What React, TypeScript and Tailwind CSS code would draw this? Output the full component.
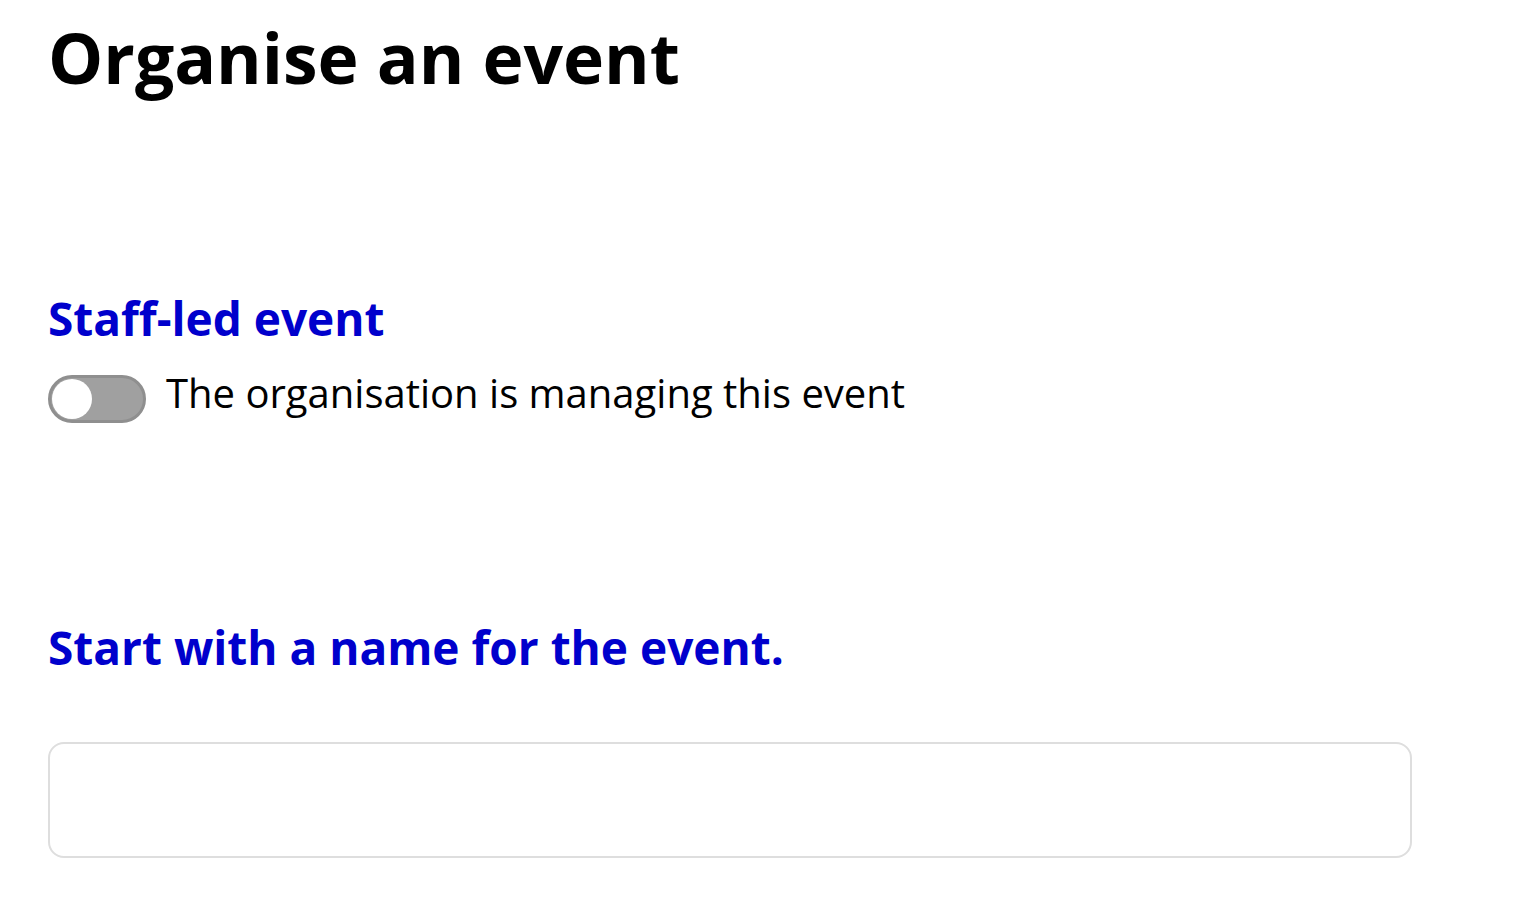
export default function App() {
  return (
    <div
      className="min-h-screen bg-white px-12 text-black"
      style={{ fontFamily: '"Open Sans", sans-serif' }}
    >
      <h1 className="pt-[16px] text-[69.5px] font-bold leading-[1.2]">Organise an event</h1>

      <section className="mt-[192px]">
        <h2 className="text-[46px] font-bold leading-[1.2] text-[#0000cc]">Staff-led event</h2>
        <label className="mt-[22px] flex items-start gap-[20px]">
          <span className="relative mt-[6px] inline-block h-[48px] w-[98px] shrink-0 rounded-full border-[3px] border-[#8f8f8f] bg-[#a0a0a0]">
            <span className="absolute left-[1px] top-[1px] h-[40px] w-[40px] rounded-full bg-white" />
          </span>
          <span className="text-[40px] leading-[1.2]">The organisation is managing this event</span>
        </label>
      </section>

      <section className="mt-[197px]">
        <h2 className="text-[46px] font-bold leading-[1.2] text-[#0000cc]">Start with a name for the event.</h2>
        <input
          type="text"
          className="mt-[67px] block h-[116px] w-[1364px] rounded-[16px] border-2 border-[#dedede] px-6 text-[40px] outline-none"
        />
      </section>
    </div>
  );
}
